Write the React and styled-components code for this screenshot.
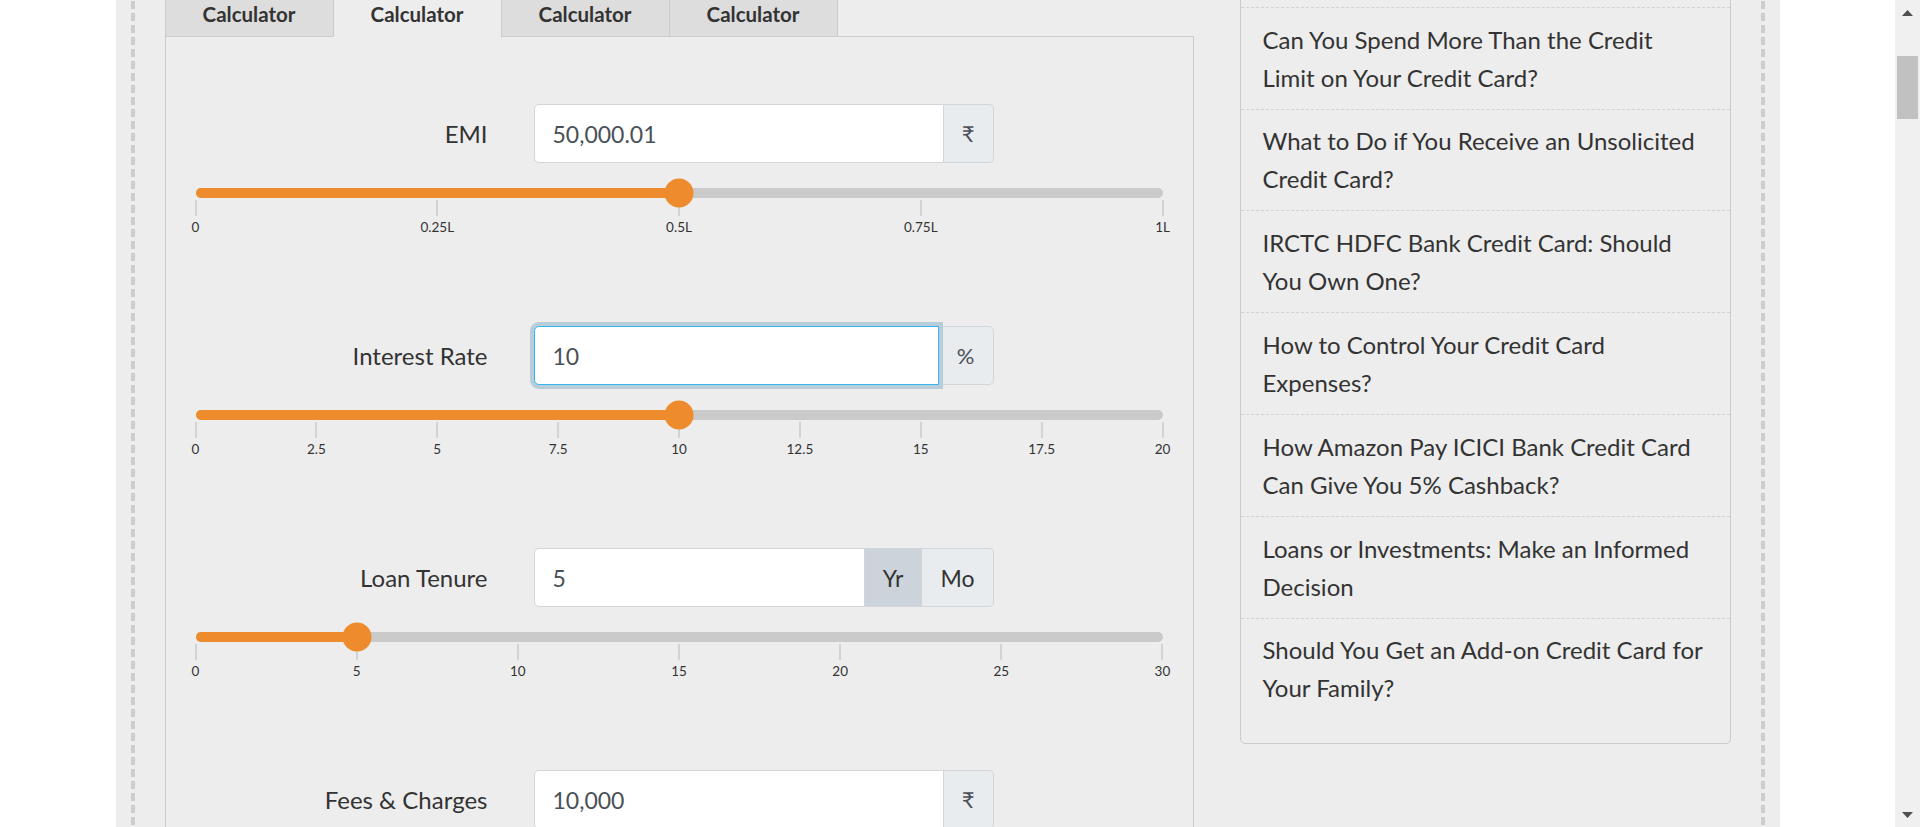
import { useLayoutEffect, useRef, useState } from 'react';
import styled, { createGlobalStyle } from 'styled-components';

const GlobalStyle = createGlobalStyle`
	html, body {
		margin: 0;
		padding: 0;
		height: 100%;
		overflow: hidden;
		background: #fff;
	}
	body {
		font-family: Lato, 'Noto Sans', 'Liberation Sans', sans-serif;
		color: #333;
	}
	*, *::before, *::after {
		box-sizing: border-box;
	}
`;

const ORANGE = '#ee8c2d';

const FIELDS = [
	{
		id: 'emi',
		label: 'EMI',
		value: '50,000.01',
		addon: '₹',
		current: 50000,
		max: 100000,
		marks: ['0', '0.25L', '0.5L', '0.75L', '1L'],
	},
	{
		id: 'rate',
		label: 'Interest Rate',
		value: '10',
		addon: '%',
		focused: true,
		current: 10,
		max: 20,
		marks: ['0', '2.5', '5', '7.5', '10', '12.5', '15', '17.5', '20'],
	},
	{
		id: 'tenure',
		label: 'Loan Tenure',
		value: '5',
		units: ['Yr', 'Mo'],
		activeUnit: 'Yr',
		current: 5,
		max: 30,
		marks: ['0', '5', '10', '15', '20', '25', '30'],
	},
	{
		id: 'fees',
		label: 'Fees & Charges',
		value: '10,000',
		addon: '₹',
		current: 10000,
		max: 100000,
		marks: ['0', '0.25L', '0.5L', '0.75L', '1L'],
	},
];

const ARTICLES = [
	'How to Improve Your Credit Score Before Applying for a Loan?',
	'Can You Spend More Than the Credit Limit on Your Credit Card?',
	'What to Do if You Receive an Unsolicited Credit Card?',
	'IRCTC HDFC Bank Credit Card: Should You Own One?',
	'How to Control Your Credit Card Expenses?',
	'How Amazon Pay ICICI Bank Credit Card Can Give You 5% Cashback?',
	'Loans or Investments: Make an Informed Decision',
	'Should You Get an Add-on Credit Card for Your Family?',
];

const Window = styled.div`
	display: flex;
	height: 100vh;
	background: #fff;
`;

const Viewport = styled.div`
	flex: 1;
	min-width: 0;
	overflow-y: scroll;
	scrollbar-width: none;
`;

const ScrollRail = styled.div`
	flex: none;
	width: 25px;
	display: flex;
	flex-direction: column;
	background: #f0f0f0;
`;

const RailButton = styled.button`
	flex: none;
	height: 25px;
	padding: 0;
	border: 0;
	display: flex;
	align-items: center;
	justify-content: center;
	background: #f0f0f0;
	cursor: default;
`;

const RailTrack = styled.div`
	flex: 1;
	position: relative;
`;

const RailThumb = styled.div`
	position: absolute;
	left: 2px;
	right: 2px;
	background: #c1c1c1;
`;

const Page = styled.div`
	max-width: 1664px;
	margin: 0 auto;
	padding: 0 15px;
	background: #ededed;
`;

const Frame = styled.div`
	min-height: 10200px;
	padding: 30px 34px 60px;
	background-image: repeating-linear-gradient(to bottom, #cdcdcd 0 8px, transparent 8px 12px),
		repeating-linear-gradient(to bottom, #cdcdcd 0 8px, transparent 8px 12px);
	background-size: 4px 100%;
	background-position: left top, right top;
	background-repeat: no-repeat;
`;

const PageHeader = styled.header`
	padding-bottom: 45px;
	margin-bottom: 49px;
	border-bottom: 1px solid #dcdcdc;
`;

const Breadcrumb = styled.nav`
	font-size: 16px;
	line-height: 24px;
	color: #777;
	margin-bottom: 16px;
`;

const PageTitle = styled.h1`
	margin: 0 0 12px;
	font-size: 36px;
	line-height: 48px;
	font-weight: 700;
`;

const Meta = styled.p`
	margin: 0;
	font-size: 18px;
	line-height: 26px;
	color: #666;
`;

const Columns = styled.div`
	display: grid;
	grid-template-columns: minmax(0, 1029fr) minmax(0, 491fr);
	column-gap: 46px;
	align-items: start;
`;

const Main = styled.section``;

const SectionTitle = styled.h2`
	margin: 0 0 14px;
	font-size: 30px;
	line-height: 40px;
	font-weight: 700;
`;

const Lead = styled.p`
	margin: 0 0 60px;
	font-size: 19px;
	line-height: 28px;
	white-space: nowrap;
`;

const TabList = styled.div`
	display: flex;
	position: relative;
	z-index: 1;
	margin-bottom: -1px;
`;

const Tab = styled.button`
	width: 169px;
	height: 51px;
	padding: 14px 0 9px;
	margin: 0 0 0 -1px;
	border: 1px solid #cbcbcb;
	border-bottom-color: ${(p) => (p.$active ? '#ededed' : '#cbcbcb')};
	background: ${(p) => (p.$active ? '#ededed' : '#dddddd')};
	font-family: inherit;
	font-size: 20.5px;
	line-height: 26px;
	font-weight: 700;
	color: #333;
	cursor: pointer;

	&:first-child {
		margin-left: 0;
	}
`;

const Panel = styled.div`
	border: 1px solid #cbcbcb;
	padding: 67px 30px 60px;
`;

const Field = styled.div`
	& + & {
		margin-top: 92px;
	}
`;

const FieldHead = styled.div`
	display: grid;
	grid-template-columns: 292px 460px;
	column-gap: 46px;
	align-items: center;
`;

const Label = styled.label`
	text-align: right;
	font-size: 24px;
	color: #333;
`;

const InputGroup = styled.div`
	display: flex;
	height: 59px;
`;

const Input = styled.input`
	flex: 1;
	min-width: 0;
	height: 100%;
	padding: 0 18px;
	border: 1px solid ${(p) => (p.$focused ? '#3ab5f0' : '#d2d6da')};
	border-radius: 5px 0 0 5px;
	background: #fff;
	font-family: inherit;
	font-size: 23px;
	color: #495057;
	outline: none;
	position: relative;
	z-index: ${(p) => (p.$focused ? 1 : 0)};
	box-shadow: ${(p) => (p.$focused ? '0 0 0 4px #b7cdd9' : 'none')};
`;

const Addon = styled.span`
	display: flex;
	align-items: center;
	justify-content: center;
	padding: 0 18px;
	border: 1px solid #d2d6da;
	border-left: 0;
	border-radius: 0 5px 5px 0;
	background: #e9ecef;
	font-family: Lato, 'Noto Sans', 'DejaVu Sans', sans-serif;
	font-size: 22px;
	color: #495057;
`;

const UnitButton = styled.button`
	display: flex;
	align-items: center;
	justify-content: center;
	padding: 0 18px;
	border: 1px solid #d2d6da;
	border-left: 0;
	background: ${(p) => (p.$active ? '#ccd3da' : '#e9ecef')};
	font-family: inherit;
	font-size: 23px;
	color: #333;
	cursor: pointer;

	&:last-child {
		border-radius: 0 5px 5px 0;
	}
`;

const Slider = styled.div`
	position: relative;
	height: 10px;
	margin-top: 25px;
	border-radius: 5px;
	background: #cacaca;
`;

const SliderFill = styled.div`
	height: 100%;
	border-radius: 5px;
	background: ${ORANGE};
`;

const SliderThumb = styled.span`
	position: absolute;
	top: 50%;
	width: 29px;
	height: 29px;
	border-radius: 50%;
	background: ${ORANGE};
	transform: translate(-50%, -50%);
`;

const Scale = styled.div`
	display: flex;
	justify-content: space-between;
	margin-top: 2px;
`;

const Mark = styled.div`
	width: 0;
	display: flex;
	flex-direction: column;
	align-items: center;
`;

const MarkLine = styled.span`
	flex: none;
	width: 2px;
	height: 16px;
	background: #d0d4d9;
`;

const MarkText = styled.span`
	margin-top: 5px;
	font-size: 13.5px;
	line-height: 13px;
	white-space: nowrap;
	color: #333;
`;

const Results = styled.div`
	margin-top: 90px;
	display: grid;
	grid-template-columns: repeat(3, 1fr);
	gap: 20px;
`;

const ResultCard = styled.div`
	background: #fff;
	border: 1px solid #d6d6d6;
	border-radius: 5px;
	padding: 18px 20px;
	font-size: 18px;

	strong {
		display: block;
		margin-top: 6px;
		font-size: 26px;
	}
`;

const Sidebar = styled.aside`
	border: 1px solid #cbcbcb;
	border-radius: 5px;
	padding-bottom: 24px;
`;

const SidebarHeading = styled.h3`
	margin: 0;
	padding: 13px 22px;
	font-size: 22.5px;
	line-height: 34px;
	font-weight: 700;
`;

const ArticleLink = styled.a`
	display: block;
	padding: 12.8px 22px 12px;
	border-top: 1px dashed #d2d2d2;
	font-size: 24px;
	line-height: 38px;
	color: #333;
	text-decoration: none;
`;

const Arrow = ({ down }) => (
	<svg width="11" height="6" viewBox="0 0 11 6">
		<path d={down ? 'M0 0H11L5.5 6Z' : 'M5.5 0L11 6H0Z'} fill="#505050" />
	</svg>
);

const SliderField = ({ field }) => {
	const pct = (field.current / field.max) * 100;

	return (
		<Field>
			<FieldHead>
				<Label htmlFor={field.id}>{field.label}</Label>
				<InputGroup>
					<Input id={field.id} defaultValue={field.value} $focused={field.focused} />
					{field.addon && <Addon>{field.addon}</Addon>}
					{field.units &&
						field.units.map((unit) => (
							<UnitButton key={unit} $active={unit === field.activeUnit}>
								{unit}
							</UnitButton>
						))}
				</InputGroup>
			</FieldHead>
			<Slider>
				<SliderFill style={{ width: `${pct}%` }} />
				<SliderThumb style={{ left: `${pct}%` }} />
			</Slider>
			<Scale>
				{field.marks.map((mark) => (
					<Mark key={mark}>
						<MarkLine />
						<MarkText>{mark}</MarkText>
					</Mark>
				))}
			</Scale>
		</Field>
	);
};

export default function App() {
	const viewportRef = useRef(null);
	const panelRef = useRef(null);
	const trackRef = useRef(null);
	const [thumb, setThumb] = useState({ top: 0, height: 0 });

	const updateThumb = () => {
		const view = viewportRef.current;
		const trackLen = trackRef.current.clientHeight;
		const height = Math.max(20, (trackLen * view.clientHeight) / view.scrollHeight);
		const range = view.scrollHeight - view.clientHeight;
		const top = range > 0 ? ((trackLen - height) * view.scrollTop) / range : 0;
		setThumb({ top, height });
	};

	// the page is shown scrolled so that the tab strip is cut at the top
	useLayoutEffect(() => {
		const view = viewportRef.current;
		const panel = panelRef.current;
		const top = panel.getBoundingClientRect().top - view.getBoundingClientRect().top + view.scrollTop;
		view.scrollTop = top - 36;
		updateThumb();
	}, []);

	return (
		<>
			<GlobalStyle />
			<Window>
				<Viewport ref={viewportRef} onScroll={updateThumb}>
					<Page>
						<Frame>
							<PageHeader>
								<Breadcrumb>Home / Calculators / EMI Calculator</Breadcrumb>
								<PageTitle>EMI Calculator</PageTitle>
								<Meta>Plan your loan repayments before you borrow.</Meta>
							</PageHeader>
							<Columns>
								<Main>
									<SectionTitle>Loan Calculator</SectionTitle>
									<Lead>Move the sliders or type the values to see your monthly payment.</Lead>
									<TabList>
										{[0, 1, 2, 3].map((i) => (
											<Tab key={i} $active={i === 1}>
												Calculator
											</Tab>
										))}
									</TabList>
									<Panel ref={panelRef}>
										{FIELDS.map((field) => (
											<SliderField key={field.id} field={field} />
										))}
										<Results>
											<ResultCard>
												Loan Amount<strong>₹ 23,53,145</strong>
											</ResultCard>
											<ResultCard>
												Total Interest<strong>₹ 6,46,856</strong>
											</ResultCard>
											<ResultCard>
												Total Payment<strong>₹ 30,00,001</strong>
											</ResultCard>
										</Results>
									</Panel>
								</Main>
								<Sidebar>
									<SidebarHeading>Related Articles</SidebarHeading>
									{ARTICLES.map((title) => (
										<ArticleLink key={title} href="#">
											{title}
										</ArticleLink>
									))}
								</Sidebar>
							</Columns>
						</Frame>
					</Page>
				</Viewport>
				<ScrollRail>
					<RailButton aria-label="Scroll up">
						<Arrow />
					</RailButton>
					<RailTrack ref={trackRef}>
						<RailThumb style={{ top: thumb.top, height: thumb.height }} />
					</RailTrack>
					<RailButton aria-label="Scroll down">
						<Arrow down />
					</RailButton>
				</ScrollRail>
			</Window>
		</>
	);
}
